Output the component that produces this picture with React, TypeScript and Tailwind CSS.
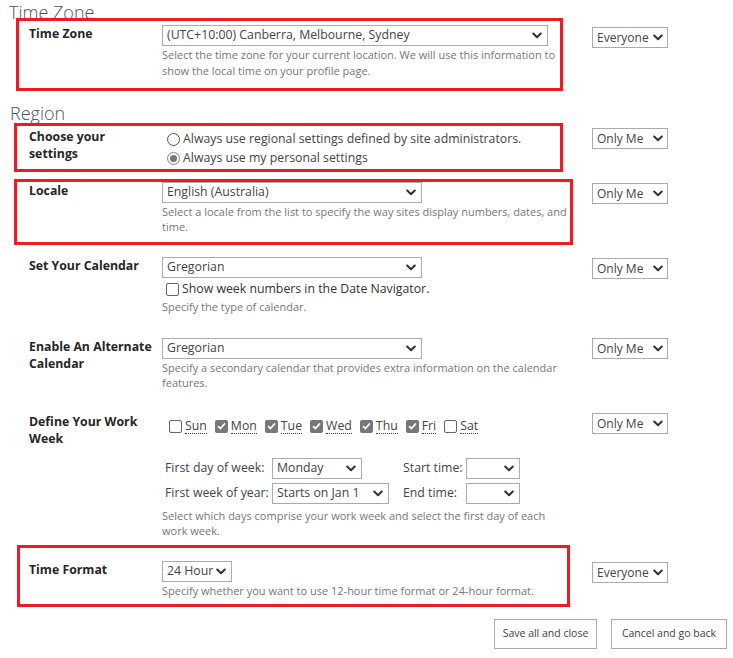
import type { ReactNode } from "react";

/* Small form primitives used across the regional settings page. */

function Chevron() {
  return (
    <svg width="10" height="7" viewBox="0 0 10 7" className="shrink-0">
      <path d="M1.2 1.5l3.8 3.8 3.8-3.8" fill="none" stroke="#333" strokeWidth="2" strokeLinecap="round" strokeLinejoin="round" />
    </svg>
  );
}

function Select({ value, className }: { value?: string; className: string }) {
  return (
    <div
      className={`flex h-[21px] items-center justify-between border border-[#ababab] bg-white text-[#444] ${className}`}
    >
      <span className="truncate whitespace-nowrap">{value}</span>
      <Chevron />
    </div>
  );
}

function Check({ checked }: { checked?: boolean }) {
  if (checked) {
    return (
      <span className="flex size-[13px] shrink-0 items-center justify-center rounded-[2px] bg-[#777]">
        <svg width="9" height="8" viewBox="0 0 9 8">
          <path d="M1 4.2l2.4 2.3L8 1.4" fill="none" stroke="#fff" strokeWidth="1.7" />
        </svg>
      </span>
    );
  }
  return <span className="size-[13px] shrink-0 rounded-[2px] border border-[#666] bg-white" />;
}

function Radio({ checked }: { checked?: boolean }) {
  return (
    <span
      className={`flex size-[13px] shrink-0 items-center justify-center rounded-full border bg-white ${
        checked ? "border-[#888]" : "border-[#555]"
      }`}
    >
      {checked && <span className="size-[7px] rounded-full bg-[#777]" />}
    </span>
  );
}

function Desc({ lines, className = "" }: { lines: string[]; className?: string }) {
  return (
    <div className={`text-[11px] leading-[15px] text-[#777] ${className}`}>
      {lines.map((l) => (
        <div key={l} className="whitespace-nowrap">
          {l}
        </div>
      ))}
    </div>
  );
}

function Row({
  label,
  privacy,
  privacyClass = "mt-[1px]",
  className,
  children,
}: {
  label: ReactNode;
  privacy: string;
  privacyClass?: string;
  className: string;
  children: ReactNode;
}) {
  return (
    <div className={`flex pl-[19px] ${className}`}>
      <div className="w-[133px] shrink-0 text-[12.3px] leading-[17px] font-bold text-[#262626]">{label}</div>
      <div className="w-[430px] shrink-0">{children}</div>
      <Select value={privacy} className={`w-[76px] pl-[4px] pr-[4px] text-[12px] ${privacyClass}`} />
    </div>
  );
}

const days = [
  { d: "Sun", on: false },
  { d: "Mon", on: true },
  { d: "Tue", on: true },
  { d: "Wed", on: true },
  { d: "Thu", on: true },
  { d: "Fri", on: true },
  { d: "Sat", on: false },
];

export default function App() {
  return (
    <div className="relative h-[658px] w-[733px] overflow-hidden bg-white pl-[10px] font-['Open_Sans',sans-serif] text-[12.3px] text-[#444]">
      <h2 className="-ml-[1px] text-[18px] leading-[24px] font-light text-[#4a5260]">Time Zone</h2>

      <Row label={<div className="leading-[18px]">Time Zone</div>} privacy="Everyone" privacyClass="mt-[2px]" className="mt-[1px]">
        <Select value="(UTC+10:00) Canberra, Melbourne, Sydney" className="w-[386px] pl-[4px] pr-[5px]" />
        <Desc
          className="mt-[1px] leading-[16px]"
          lines={[
            "Select the time zone for your current location. We will use this information to",
            "show the local time on your profile page.",
          ]}
        />
      </Row>

      <h2 className="mt-[22px] text-[18px] leading-[24px] font-light text-[#4a5260]">Region</h2>

      <Row label={<>Choose your<br />settings</>} privacy="Only Me" privacyClass="mt-0" className="mt-[3px]">
        <div className="mt-[2px] pl-[5px]">
          <label className="flex h-[19px] items-center gap-[3px]">
            <Radio />
            <span>Always use regional settings defined by site administrators.</span>
          </label>
          <label className="flex h-[19px] items-center gap-[3px]">
            <Radio checked />
            <span>Always use my personal settings</span>
          </label>
        </div>
      </Row>

      <Row label={<div className="leading-[18px]">Locale</div>} privacy="Only Me" className="mt-[14px]">
        <Select value="English (Australia)" className="w-[260px] pl-[4px] pr-[5px]" />
        <Desc
          className="mt-[1px]"
          lines={["Select a locale from the list to specify the way sites display numbers, dates, and", "time."]}
        />
      </Row>

      <Row label={<div className="leading-[18px]">Set Your Calendar</div>} privacy="Only Me" className="mt-[23px]">
        <Select value="Gregorian" className="w-[260px] pl-[4px] pr-[5px]" />
        <label className="mt-[2px] flex h-[18px] items-center gap-[3px] pl-[4px] text-[#333]">
          <Check />
          <span>Show week numbers in the Date Navigator.</span>
        </label>
        <Desc className="mt-[1px]" lines={["Specify the type of calendar."]} />
      </Row>

      <Row label={<>Enable An Alternate<br />Calendar</>} privacy="Only Me" privacyClass="mt-0" className="mt-[24px]">
        <Select value="Gregorian" className="w-[260px] pl-[4px] pr-[5px]" />
        <Desc
          className="mt-[1px]"
          lines={["Specify a secondary calendar that provides extra information on the calendar", "features."]}
        />
      </Row>

      <Row label={<>Define Your Work<br />Week</>} privacy="Only Me" privacyClass="mt-0" className="mt-[23px]">
        <div className="mt-[4px] flex h-[18px] items-center gap-[8px] pl-[7px]">
          {days.map((x) => (
            <label key={x.d} className="flex items-center gap-[3px]">
              <Check checked={x.on} />
              <abbr className="border-b border-dotted border-[#444] leading-[14px] no-underline">{x.d}</abbr>
            </label>
          ))}
        </div>
        <div className="mt-[23px] flex items-center">
          <span className="w-[110px] pl-[3px]">First day of week:</span>
          <Select value="Monday" className="w-[90px] pl-[4px] pr-[5px]" />
          <span className="ml-[41px] w-[63px]">Start time:</span>
          <Select className="w-[54px] pl-[4px] pr-[5px]" />
        </div>
        <div className="mt-[4px] flex items-center">
          <span className="w-[110px] pl-[3px]">First week of year:</span>
          <Select value="Starts on Jan 1" className="w-[117px] pl-[4px] pr-[5px]" />
          <span className="ml-[14px] w-[63px]">End time:</span>
          <Select className="w-[54px] pl-[4px] pr-[5px]" />
        </div>
        <Desc
          className="mt-[4px]"
          lines={["Select which days comprise your work week and select the first day of each", "work week."]}
        />
      </Row>

      <Row label={<div className="leading-[18px]">Time Format</div>} privacy="Everyone" className="mt-[23px]">
        <Select value="24 Hour" className="w-[70px] pl-[4px] pr-[5px]" />
        <Desc className="mt-[1px]" lines={["Specify whether you want to use 12-hour time format or 24-hour format."]} />
      </Row>

      <div className="mt-[21px] flex justify-end gap-[14px] pr-[6px]">
        <button className="h-[30px] w-[103px] border border-[#ababab] bg-[#fdfdfd] text-[10.5px] text-[#444]">
          Save all and close
        </button>
        <button className="h-[30px] w-[116px] border border-[#ababab] bg-[#fdfdfd] text-[10.5px] text-[#444]">
          Cancel and go back
        </button>
      </div>

      {/* highlight frames drawn over the edited settings */}
      <div className="pointer-events-none absolute top-[18px] left-[16px] h-[73px] w-[547px] border-[3px] border-[#ed1c24]" />
      <div className="pointer-events-none absolute top-[123px] left-[14px] h-[49px] w-[549px] border-[3px] border-[#ed1c24]" />
      <div className="pointer-events-none absolute top-[179px] left-[14px] h-[66px] w-[559px] border-[3px] border-[#ed1c24]" />
      <div className="pointer-events-none absolute top-[545px] left-[17px] h-[62px] w-[553px] border-[3px] border-[#ed1c24]" />
    </div>
  );
}
